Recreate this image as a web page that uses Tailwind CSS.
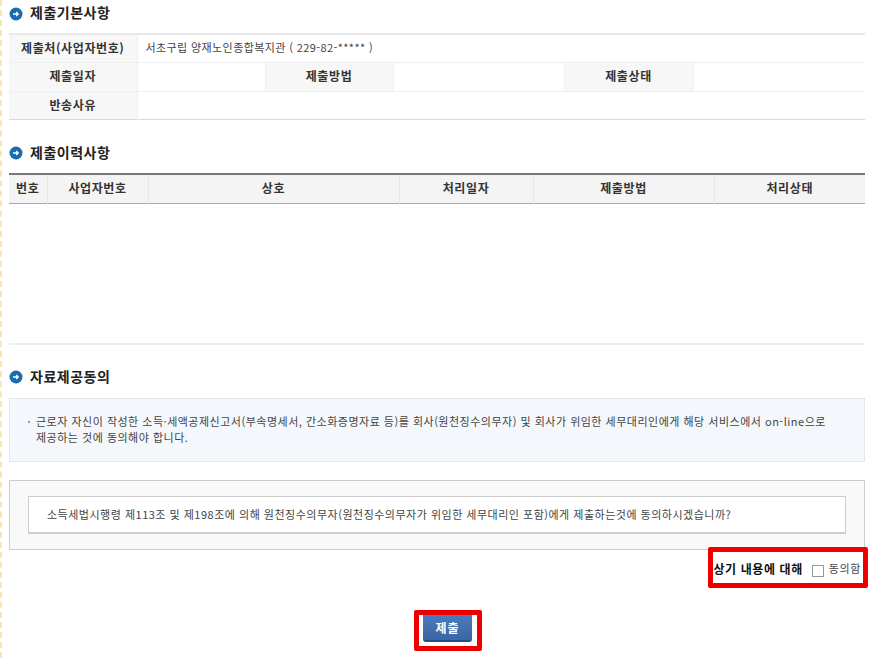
<!DOCTYPE html>
<html lang="ko">
  <head>
    <meta charset="UTF-8" />
    <title>자료제공동의</title>
    <script src="https://cdn.jsdelivr.net/npm/@tailwindcss/browser@4"></script>
  </head>
  <body class="bg-white font-['Noto_Sans_CJK_KR','Noto_Sans',sans-serif] text-[11px] text-[#444] overflow-hidden">
    <div class="w-[884px] h-[658px] overflow-hidden border-l-2 border-dashed border-[#f8e6b0] pl-[7px]">
      <div class="w-[856px]">
        <!-- 제출기본사항 -->
        <h2 class="h-[33px] pb-[9px] flex items-center gap-[7px] text-[14px] font-bold text-[#222] tracking-[0.5px]">
          <svg class="mt-[3px]" width="14" height="14" viewBox="0 0 14 14"><circle cx="7" cy="7" r="6.5" fill="#1a6cb0" /><path d="M4 7h5M7.2 5l2 2-2 2" fill="none" stroke="#fff" stroke-width="1.3" /></svg>
          제출기본사항
        </h2>
        <table class="w-full table-fixed border-collapse border-t-2 border-b border-t-[#e8e8e8] border-b-[#d9d9d9]">
          <colgroup>
            <col class="w-[128px]" /><col class="w-[128px]" /><col class="w-[128px]" /><col class="w-[171px]" /><col class="w-[129px]" /><col />
          </colgroup>
          <tbody>
            <tr class="h-[28px] border-b border-[#efefef]">
              <th class="pb-[1px] bg-[#f7f7f7] border-r border-[#efefef] font-bold text-[12px] text-[#333] tracking-[0.6px]">제출처(사업자번호)</th>
              <td colspan="5" class="pb-[2px] pl-[8px] tracking-[0.4px]">서초구립 양재노인종합복지관 ( 229-82-***** )</td>
            </tr>
            <tr class="h-[29px] border-b border-[#efefef]">
              <th class="pb-[1px] bg-[#f7f7f7] border-r border-[#efefef] font-bold text-[12px] text-[#333] tracking-[0.6px]">제출일자</th>
              <td></td>
              <th class="pb-[1px] bg-[#f7f7f7] border-x border-[#efefef] font-bold text-[12px] text-[#333] tracking-[0.6px]">제출방법</th>
              <td></td>
              <th class="pb-[1px] bg-[#f7f7f7] border-x border-[#efefef] font-bold text-[12px] text-[#333] tracking-[0.6px]">제출상태</th>
              <td></td>
            </tr>
            <tr class="h-[28px]">
              <th class="pb-[1px] bg-[#f7f7f7] border-r border-[#efefef] font-bold text-[12px] text-[#333] tracking-[0.6px]">반송사유</th>
              <td colspan="5"></td>
            </tr>
          </tbody>
        </table>

        <!-- 제출이력사항 -->
        <h2 class="mt-[20px] h-[33px] pb-[8px] flex items-center gap-[7px] text-[14px] font-bold text-[#222] tracking-[0.5px]">
          <svg class="mt-[2px]" width="14" height="14" viewBox="0 0 14 14"><circle cx="7" cy="7" r="6.5" fill="#1a6cb0" /><path d="M4 7h5M7.2 5l2 2-2 2" fill="none" stroke="#fff" stroke-width="1.3" /></svg>
          제출이력사항
        </h2>
        <table class="w-full table-fixed border-collapse border-t-2 border-b border-t-[#777] border-b-[#aaa]">
          <colgroup>
            <col class="w-[38px]" /><col class="w-[101px]" /><col class="w-[251px]" /><col class="w-[134px]" /><col class="w-[181px]" /><col />
          </colgroup>
          <thead>
            <tr class="h-[30px] bg-[#f4f4f4] text-[12px] text-[#333] tracking-[0.6px]">
              <th class="pb-[2px] border-r border-[#e6e6e6] font-bold">번호</th>
              <th class="pb-[2px] border-r border-[#e6e6e6] font-bold">사업자번호</th>
              <th class="pb-[2px] border-r border-[#e6e6e6] font-bold">상호</th>
              <th class="pb-[2px] border-r border-[#e6e6e6] font-bold">처리일자</th>
              <th class="pb-[2px] border-r border-[#e6e6e6] font-bold">제출방법</th>
              <th class="pb-[2px] font-bold">처리상태</th>
            </tr>
          </thead>
        </table>
        <div class="h-[141px] border-b-2 border-[#eee]"></div>

        <!-- 자료제공동의 -->
        <h2 class="h-[53px] pt-[10px] flex items-center gap-[7px] text-[14px] font-bold text-[#222] tracking-[0.5px]">
          <svg class="mt-[1px]" width="14" height="14" viewBox="0 0 14 14"><circle cx="7" cy="7" r="6.5" fill="#1a6cb0" /><path d="M4 7h5M7.2 5l2 2-2 2" fill="none" stroke="#fff" stroke-width="1.3" /></svg>
          자료제공동의
        </h2>
        <div class="h-[64px] bg-[#f4f7fb] border border-[#e3e8f0] pl-[26px] pr-[30px] pt-[14px] text-[11px] leading-[16px] tracking-[0.5px] text-[#444] relative">
          <span class="absolute left-[18px] top-[22px] w-[2px] h-[2px] bg-[#999]"></span>
          근로자 자신이 작성한 소득·세액공제신고서(부속명세서, 간소화증명자료 등)를 회사(원천징수의무자) 및 회사가 위임한 세무대리인에게 해당 서비스에서 on-line으로 제공하는 것에 동의해야 합니다.
        </div>
        <div class="mt-[18px] h-[70px] bg-[#f9f9f9] border border-[#ccc] px-[18px] pt-[15px]">
          <div class="h-[38px] bg-white border border-[#ccc] border-b-2 flex items-center pl-[18px] text-[11px] tracking-[0.5px] text-[#444]">
            소득세법시행령 제113조 및 제198조에 의해 원천징수의무자(원천징수의무자가 위임한 세무대리인 포함)에게 제출하는것에 동의하시겠습니까?
          </div>
        </div>

        <div class="relative h-[39px] flex items-center justify-end pr-[4px] pb-[2px]">
          <span class="font-bold text-[12px] text-[#111] tracking-[0.6px]">상기 내용에 대해</span>
          <span class="ml-[9px] mt-[4px] w-[12px] h-[12px] border border-[#999] bg-white"></span>
          <span class="ml-[5px] text-[#444] tracking-[0.6px]">동의함</span>
          <span class="absolute left-[699px] top-[-3px] w-[160px] h-[41px] border-[5px] border-[#ee0000] rounded-[2px]"></span>
        </div>

        <div class="relative mt-[26px] flex justify-center pl-[21px]">
          <button class="w-[49px] h-[27px] rounded-b-[3px] bg-gradient-to-b from-[#4d7ab8] to-[#3a66a5] border-b-2 border-[#2b4d85] text-white font-bold text-[12px] tracking-[1px]">제출</button>
          <span class="absolute left-[405px] top-[-5px] w-[68px] h-[41px] border-[5px] border-[#ee0000] rounded-[2px]"></span>
        </div>
      </div>
    </div>
  </body>
</html>
